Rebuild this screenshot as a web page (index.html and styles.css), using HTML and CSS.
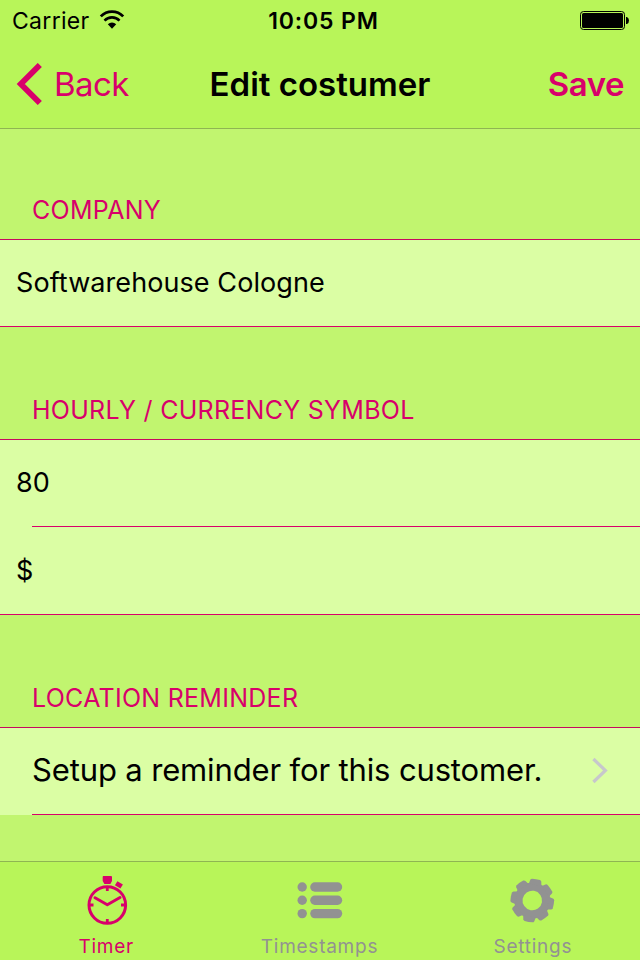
FILE: index.html
```html
<!DOCTYPE html>
<html lang="en">

<head>
    <meta charset="UTF-8">
    <meta name="viewport" content="width=device-width, initial-scale=1.0">
    <title>Edit costumer</title>
    <link rel="stylesheet" href="styles.css">
</head>

<body>
    <div class="screen">
        <header class="top">
            <div class="status">
                <div class="status-left">
                    <span class="carrier">Carrier</span>
                    <svg class="wifi" width="26" height="20" viewBox="0 0 26 20">
                        <path d="M1.8 6.4 A15.6 15.6 0 0 1 24.2 6.4" fill="none" stroke="#000" stroke-width="2.8"/>
                        <path d="M5.5 10.6 A10.4 10.4 0 0 1 20.5 10.6" fill="none" stroke="#000" stroke-width="2.6"/>
                        <path d="M13 18.8 L8.8 14.3 A6 6 0 0 1 17.2 14.3 Z"/>
                    </svg>
                </div>
                <span class="time">10:05 PM</span>
                <svg class="battery" width="50" height="20" viewBox="0 0 50 20">
                    <rect x="0.5" y="1.5" width="44" height="18" rx="3" fill="none" stroke="#000"/>
                    <rect x="2" y="3" width="41" height="15" rx="1.5"/>
                    <path d="M46 7 h1 q2 1 2 3.5 t-2 3.5 h-1 z"/>
                </svg>
            </div>
            <nav class="nav">
                <a class="back">
                    <svg width="26" height="42" viewBox="0 0 26 42">
                        <path d="M23.8 2 L4.8 21 L23.8 40" fill="none" stroke="currentColor" stroke-width="5.8"/>
                    </svg>
                    <span>Back</span>
                </a>
                <h1 class="title">Edit costumer</h1>
                <a class="save">Save</a>
            </nav>
        </header>

        <main class="form">
            <h2 class="label first">Company</h2>
            <div class="cell"><span>Softwarehouse Cologne</span></div>

            <h2 class="label">Hourly / Currency Symbol</h2>
            <div class="cell inset"><span>80</span></div>
            <div class="cell tall"><span>$</span></div>

            <h2 class="label">Location Reminder</h2>
            <div class="cell inset link">
                <span>Setup a reminder for this customer.</span>
                <svg width="18" height="28" viewBox="0 0 18 28">
                    <path d="M1.4 3 L13.4 14.5 L1.4 26" fill="none" stroke="#c7c7cc" stroke-width="3.2"/>
                </svg>
            </div>
        </main>

        <footer class="tabs">
            <a class="tab active">
                <svg width="60" height="60" viewBox="0 0 60 60">
                    <g fill="none" stroke="currentColor">
                        <circle cx="30.3" cy="35" r="18.3" stroke-width="3"/>
                        <path d="M30.3 17 v4 M30.3 49 v4 M12 35 h4.5 M44 35 h4.5" stroke-width="2.8"/>
                        <path d="M18 27.7 L30.3 34.7 L43 27.5" stroke-width="3" stroke-linecap="round" stroke-linejoin="round"/>
                    </g>
                    <path fill="currentColor" d="M26 6 h8.5 l.5 1 v4 l-1.6 3 h-6 l-1.7 -3 v-4 z"/>
                    <path fill="currentColor" d="M40.4 11.3 l5.5 3.2 -2.5 4 -5.5 -3.2 z"/>
                </svg>
                <span>Timer</span>
            </a>
            <a class="tab">
                <svg width="60" height="60" viewBox="0 0 60 60" fill="currentColor">
                    <circle cx="12.2" cy="17" r="4.7"/>
                    <circle cx="12.2" cy="30.3" r="4.7"/>
                    <circle cx="12.2" cy="43.6" r="4.7"/>
                    <rect x="20.2" y="12.3" width="32" height="9.4" rx="4.7"/>
                    <rect x="20.2" y="25.6" width="32" height="9.4" rx="4.7"/>
                    <rect x="20.2" y="38.9" width="32" height="9.4" rx="4.7"/>
                </svg>
                <span>Timestamps</span>
            </a>
            <a class="tab">
                <svg width="60" height="60" viewBox="0 0 60 60">
                    <g transform="translate(29.3 30.5) rotate(10)">
                        <circle r="13.9" fill="none" stroke="currentColor" stroke-width="8.2"/>
                        <g fill="currentColor">
                            <path id="tooth" d="M-6.4 -16 L-5.6 -20 Q-5.2 -21.3 -4 -21.5 Q0 -22 4 -21.5 Q5.2 -21.3 5.6 -20 L6.4 -16 Z"/>
                            <use href="#tooth" transform="rotate(45)"/>
                            <use href="#tooth" transform="rotate(90)"/>
                            <use href="#tooth" transform="rotate(135)"/>
                            <use href="#tooth" transform="rotate(180)"/>
                            <use href="#tooth" transform="rotate(225)"/>
                            <use href="#tooth" transform="rotate(270)"/>
                            <use href="#tooth" transform="rotate(315)"/>
                        </g>
                    </g>
                </svg>
                <span>Settings</span>
            </a>
        </footer>
    </div>
</body>

</html>
```

FILE: styles.css
```css
* {
    margin: 0;
    padding: 0;
    box-sizing: border-box;
}

body {
    font-family: Inter, "Liberation Sans", sans-serif;
    color: #000;
    background: #c1f56f;
}

svg {
    display: block;
    flex: none;
}

.screen {
    width: 640px;
    height: 960px;
    display: flex;
    flex-direction: column;
    overflow: hidden;
    white-space: nowrap;
}

/* status bar + navigation */
.top {
    height: 129px;
    background: #b8f559;
    border-bottom: 1px solid #8fb552;
}

.status {
    height: 40px;
    padding: 0 10px 0 12px;
    display: grid;
    grid-template-columns: 1fr auto 1fr;
    align-items: center;
}

.status-left {
    display: flex;
    align-items: center;
    gap: 9px;
}

.carrier {
    padding-top: 2px;
    font-size: 23px;
    letter-spacing: 0.3px;
}

.time {
    padding: 2px 0 0 5px;
    font-size: 23px;
    font-weight: 600;
    letter-spacing: 0.85px;
}

.battery {
    justify-self: end;
}

.nav {
    height: 88px;
    padding: 0 16px;
    display: grid;
    grid-template-columns: 1fr auto 1fr;
    align-items: center;
}

.back {
    display: flex;
    align-items: center;
    gap: 12px;
    font-size: 33px;
    letter-spacing: -0.6px;
    color: #d8006b;
}

.title {
    font-size: 33px;
    font-weight: 600;
}

.save {
    justify-self: end;
    font-size: 33px;
    font-weight: 600;
    letter-spacing: -0.5px;
    color: #d8006b;
}

/* grouped form */
.form {
    flex: 1;
}

.label {
    height: 113px;
    padding: 0 32px 13px;
    display: flex;
    align-items: flex-end;
    border-bottom: 1px solid #c7085f;
    font-size: 25px;
    line-height: 32px;
    font-weight: 400;
    letter-spacing: 0.27px;
    text-transform: uppercase;
    color: #d8006b;
}

.first {
    height: 111px;
}

.cell {
    height: 87px;
    padding: 0 16px 2px;
    display: flex;
    align-items: center;
    background: #dbfea4;
    border-bottom: 1px solid #d8006b;
    font-size: 27px;
    letter-spacing: 0.08px;
}

.tall {
    height: 88px;
    padding-bottom: 0;
}

.inset {
    border-bottom: 0;
    background: linear-gradient(#d8006b, #d8006b) 32px 100% / 100% 1px no-repeat #dbfea4;
}

.link {
    padding: 0 30px 4px 32px;
    justify-content: space-between;
    font-size: 31px;
    letter-spacing: -0.14px;
}

/* tab bar */
.tabs {
    height: 99px;
    display: grid;
    grid-template-columns: repeat(3, 1fr);
    background: #b8f559;
    border-top: 1px solid #8fb552;
}

.tab {
    padding-top: 8px;
    display: flex;
    flex-direction: column;
    align-items: center;
    font-size: 19px;
    line-height: 34px;
    letter-spacing: 0.75px;
    color: #929292;
}

.tab span {
    margin-right: 1px;
}

.active {
    color: #d8006b;
}
```
